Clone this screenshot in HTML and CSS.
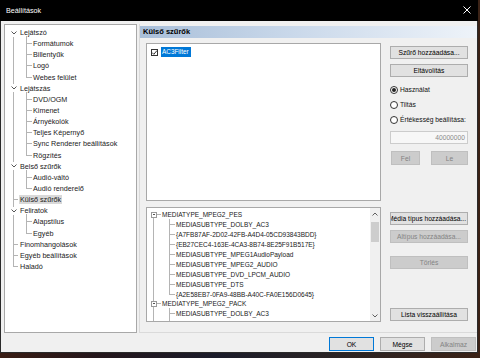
FILE: index.html
```html
<!DOCTYPE html>
<html lang="hu">
<head>
<meta charset="utf-8">
<title>Beállítások</title>
<link rel="stylesheet" href="styles.css">
</head>
<body>
<div class="window">
  <div class="titlebar">
    <span class="title">Beállítások</span>
    <svg class="close" width="8" height="8" viewBox="0 0 8 8"><path d="M0.5 0.5L7.5 7.5M7.5 0.5L0.5 7.5" stroke="#fff" stroke-width="1" fill="none"/></svg>
  </div>
  <div class="client">
    <div class="main">
      <div class="nav">
        <ul class="tree">
          <li>
            <div class="trow"><span class="tog"><svg width="6" height="4" viewBox="0 0 6 4"><path d="M0.5 0.5L3 3L5.5 0.5" stroke="#555" fill="none"/></svg></span><span>Lejátszó</span></div>
            <ul class="tsub">
              <li><div class="trow child"><span class="cstub"></span><span>Formátumok</span></div></li>
              <li><div class="trow child"><span class="cstub"></span><span>Billentyűk</span></div></li>
              <li><div class="trow child"><span class="cstub"></span><span>Logó</span></div></li>
              <li><div class="trow child"><span class="cstub"></span><span>Webes felület</span></div></li>
            </ul>
          </li>
          <li>
            <div class="trow"><span class="tog"><svg width="6" height="4" viewBox="0 0 6 4"><path d="M0.5 0.5L3 3L5.5 0.5" stroke="#555" fill="none"/></svg></span><span>Lejátszás</span></div>
            <ul class="tsub">
              <li><div class="trow child"><span class="cstub"></span><span>DVD/OGM</span></div></li>
              <li><div class="trow child"><span class="cstub"></span><span>Kimenet</span></div></li>
              <li><div class="trow child"><span class="cstub"></span><span>Árnyékolók</span></div></li>
              <li><div class="trow child"><span class="cstub"></span><span>Teljes Képernyő</span></div></li>
              <li><div class="trow child"><span class="cstub"></span><span>Sync Renderer beállítások</span></div></li>
              <li><div class="trow child"><span class="cstub"></span><span>Rögzítés</span></div></li>
            </ul>
          </li>
          <li>
            <div class="trow"><span class="tog"><svg width="6" height="4" viewBox="0 0 6 4"><path d="M0.5 0.5L3 3L5.5 0.5" stroke="#555" fill="none"/></svg></span><span>Belső szűrők</span></div>
            <ul class="tsub">
              <li><div class="trow child"><span class="cstub"></span><span>Audió-váltó</span></div></li>
              <li><div class="trow child"><span class="cstub"></span><span>Audió renderelő</span></div></li>
            </ul>
          </li>
          <li><div class="trow"><span class="stub"></span><span class="sel">Külső szűrők</span></div></li>
          <li>
            <div class="trow"><span class="tog"><svg width="6" height="4" viewBox="0 0 6 4"><path d="M0.5 0.5L3 3L5.5 0.5" stroke="#555" fill="none"/></svg></span><span>Feliratok</span></div>
            <ul class="tsub">
              <li><div class="trow child"><span class="cstub"></span><span>Alapstílus</span></div></li>
              <li><div class="trow child"><span class="cstub"></span><span>Egyéb</span></div></li>
            </ul>
          </li>
          <li><div class="trow"><span class="stub"></span><span>Finomhangolások</span></div></li>
          <li><div class="trow"><span class="stub"></span><span>Egyéb beállítások</span></div></li>
          <li><div class="trow"><span class="stub"></span><span>Haladó</span></div></li>
        </ul>
      </div>

      <div class="page">
        <div class="page-header">Külső szűrők</div>
        <div class="page-body">
          <div class="section upper">
            <div class="listbox">
              <div class="litem">
                <span class="check"><svg width="7" height="7" viewBox="0 0 7 7"><path d="M1 3.5L2.8 5.3L6 1.5" stroke="#333" fill="none"/></svg></span>
                <span class="lsel">AC3Filter</span>
              </div>
            </div>
            <div class="side">
              <button class="btn b-add">Szűrő hozzáadása...</button>
              <button class="btn b-remove">Eltávolítás</button>
              <div class="radios">
                <label class="radio"><span class="rdot on"></span>Használat</label>
                <label class="radio"><span class="rdot"></span>Tiltás</label>
                <label class="radio"><span class="rdot"></span>Értékesség beállítása:</label>
              </div>
              <div class="numbox">40000000</div>
              <div class="updown">
                <button class="btn dis b-up">Fel</button>
                <button class="btn dis b-down">Le</button>
              </div>
            </div>
          </div>
          <div class="section lower">
            <div class="typebox">
              <div class="tlist">
                <ul class="mtree">
                  <li>
                    <div class="mrow"><span class="mbox"></span><span class="mstub"></span><span>MEDIATYPE_MPEG2_PES</span></div>
                    <ul class="msub">
                      <li><div class="mrow mchild"><span class="mcstub"></span><span>MEDIASUBTYPE_DOLBY_AC3</span></div></li>
                      <li><div class="mrow mchild"><span class="mcstub"></span><span>{A7FB87AF-2D02-42FB-A4D4-05CD93843BDD}</span></div></li>
                      <li><div class="mrow mchild"><span class="mcstub"></span><span>{EB27CEC4-163E-4CA3-8B74-8E25F91B517E}</span></div></li>
                      <li><div class="mrow mchild"><span class="mcstub"></span><span>MEDIASUBTYPE_MPEG1AudioPayload</span></div></li>
                      <li><div class="mrow mchild"><span class="mcstub"></span><span>MEDIASUBTYPE_MPEG2_AUDIO</span></div></li>
                      <li><div class="mrow mchild"><span class="mcstub"></span><span>MEDIASUBTYPE_DVD_LPCM_AUDIO</span></div></li>
                      <li><div class="mrow mchild"><span class="mcstub"></span><span>MEDIASUBTYPE_DTS</span></div></li>
                      <li><div class="mrow mchild"><span class="mcstub"></span><span>{A2E58EB7-0FA9-48BB-A40C-FA0E156D0645}</span></div></li>
                    </ul>
                  </li>
                  <li>
                    <div class="mrow"><span class="mbox"></span><span class="mstub"></span><span>MEDIATYPE_MPEG2_PACK</span></div>
                    <ul class="msub more">
                      <li><div class="mrow mchild"><span class="mcstub"></span><span>MEDIASUBTYPE_DOLBY_AC3</span></div></li>
                    </ul>
                  </li>
                </ul>
              </div>
              <div class="vscroll">
                <svg class="sarrow" width="6" height="4" viewBox="0 0 6 4"><path d="M0.5 3.5L3 1L5.5 3.5" stroke="#606060" fill="none"/></svg>
                <div class="thumb"></div>
                <svg class="sarrow down" width="6" height="4" viewBox="0 0 6 4"><path d="M0.5 0.5L3 3L5.5 0.5" stroke="#606060" fill="none"/></svg>
              </div>
            </div>
            <div class="side side-lower">
              <button class="btn b-media"><span class="clip">Média típus hozzáadása...</span></button>
              <button class="btn dis b-sub">Altípus hozzáadása...</button>
              <button class="btn dis b-del">Törlés</button>
              <button class="btn b-reset">Lista visszaállítása</button>
            </div>
          </div>
        </div>
      </div>
    </div>
    <div class="footer">
      <button class="btn fbtn default">OK</button>
      <button class="btn fbtn">Mégse</button>
      <button class="btn fbtn dis">Alkalmaz</button>
    </div>
  </div>
</div>
</body>
</html>
```

FILE: styles.css
```css
html, body {
  margin: 0;
  padding: 0;
}
body {
  width: 480px;
  height: 358px;
  overflow: hidden;
  background: linear-gradient(to right, #3a1d14 0%, #24161b 20%, #1b1c2a 45%, #2b2424 70%, #3b2216 100%);
  font-family: "Liberation Sans", Arial, sans-serif;
  color: #000;
}
ul { list-style: none; margin: 0; padding: 0; }

.window {
  width: 478px;
  height: 353px;
  box-sizing: border-box;
  border: 1px solid #2a2a2a;
  border-top: none;
  background: #f0f0f0;
  display: flex;
  flex-direction: column;
}
.titlebar {
  height: 21px;
  flex: none;
  background: #000;
  margin: 0 -1px;
  display: flex;
  align-items: center;
  justify-content: space-between;
  padding: 0 6px 1px 6px;
  box-sizing: border-box;
}
.title {
  color: #fff;
  font-size: 7.2px;
}
.close { display: block; margin-right: 1px; }

.client {
  flex: 1;
  display: flex;
  flex-direction: column;
  padding: 3px 0 0 3px;
}
.main {
  display: flex;
  gap: 2px;
  height: 309px;
}

/* navigation tree */
.nav {
  width: 133px;
  flex: none;
  box-sizing: border-box;
  border: 1px solid #a8a8a8;
  background: #fff;
  padding-top: 2px;
  font-size: 7.2px;
  overflow: hidden;
}
.tree { position: relative; }
.tree::before {
  content: "";
  position: absolute;
  left: 8px;
  top: 5px;
  bottom: 6px;
  border-left: 1px solid #b4b4b4;
}
.tsub { position: relative; }
.tsub::before {
  content: "";
  position: absolute;
  left: 21px;
  top: -2px;
  bottom: 6px;
  border-left: 1px solid #b4b4b4;
}
.trow {
  height: 11.15px;
  display: flex;
  align-items: center;
  padding-left: 4px;
  white-space: nowrap;
  color: #1a1a1a;
}
.tog {
  width: 9px;
  height: 8px;
  flex: none;
  margin-right: 2px;
  display: flex;
  align-items: center;
  justify-content: center;
  background: #fff;
  position: relative;
  z-index: 1;
}
.tog svg { display: block; }
.stub {
  width: 9px;
  align-self: stretch;
  flex: none;
  margin-right: 2px;
  background: linear-gradient(#b4b4b4, #b4b4b4) no-repeat 4px 50% / 6px 1px;
}
.trow.child { padding-left: 21px; }
.cstub {
  width: 6px;
  align-self: stretch;
  flex: none;
  margin-right: 1px;
  background: linear-gradient(#b4b4b4, #b4b4b4) no-repeat 0 50% / 6px 1px;
}
.sel {
  background: #d9d9d9;
  padding: 0 1px;
  margin-left: -1px;
}

/* page */
.page {
  width: 338px;
  flex: none;
  box-sizing: border-box;
  border-left: 1px solid #dadada;
  border-bottom: 1px solid #dadada;
  display: flex;
  flex-direction: column;
}
.page-header {
  margin-top: 2px;
  height: 12px;
  line-height: 12px;
  padding-left: 3px;
  font-weight: bold;
  font-size: 7.5px;
  background: linear-gradient(to right, #a9bfd9 0%, #c9d8ea 45%, #eef3f9 100%);
}
.page-body {
  padding-left: 6px;
  padding-top: 5px;
}
.section { display: flex; gap: 9px; }
.listbox {
  width: 235px;
  height: 158px;
  box-sizing: border-box;
  border: 1px solid #a8a8a8;
  background: #fff;
  padding: 3px 0 0 4px;
}
.litem {
  display: flex;
  align-items: center;
  height: 10px;
}
.check {
  width: 7px;
  height: 7px;
  box-sizing: border-box;
  border: 1px solid #333;
  display: flex;
  align-items: center;
  justify-content: center;
  margin-right: 3px;
}
.check svg { display: block; flex: none; }
.lsel {
  background: #0078d7;
  color: #fff;
  font-size: 6.4px;
  line-height: 10px;
  padding: 0 2px 0 1px;
}

.side {
  width: 78px;
  display: flex;
  flex-direction: column;
  font-size: 6.7px;
}
.btn {
  display: block;
  box-sizing: border-box;
  width: 78px;
  height: 13px;
  padding: 0;
  margin: 0;
  border: 1px solid #adadad;
  background: #e1e1e1;
  font-family: "Liberation Sans", Arial, sans-serif;
  font-size: 6.7px;
  color: #000;
  text-align: center;
  white-space: nowrap;
  overflow: hidden;
}
.btn.dis {
  background: #cccccc;
  border-color: #bfbfbf;
  color: #838383;
}
.b-add { margin-top: 3px; }
.b-remove { margin-top: 5px; }
.radios {
  margin-top: 5px;
  display: flex;
  flex-direction: column;
}
.radio {
  height: 15px;
  display: flex;
  align-items: center;
  white-space: nowrap;
  color: #111;
}
.rdot {
  width: 8px;
  height: 8px;
  box-sizing: border-box;
  border: 1px solid #333;
  border-radius: 50%;
  background: #fff;
  margin-right: 2px;
  display: flex;
  align-items: center;
  justify-content: center;
}
.rdot.on::after {
  content: "";
  width: 4px;
  height: 4px;
  border-radius: 50%;
  background: #222;
}
.numbox {
  margin-top: 4px;
  height: 13px;
  box-sizing: border-box;
  border: 1px solid #cccccc;
  background: #f7f7f7;
  color: #8a8a8a;
  text-align: right;
  line-height: 11px;
  padding-right: 2px;
}
.updown {
  margin-top: 7px;
  display: flex;
  justify-content: space-between;
}
.b-up { width: 29px; height: 14px; margin-left: 1px; }
.b-down { width: 37px; height: 14px; }

/* lower section */
.lower { margin-top: 6px; }
.typebox {
  width: 235px;
  height: 115px;
  box-sizing: border-box;
  border: 1px solid #a8a8a8;
  background: #fff;
  display: flex;
}
.tlist {
  flex: 1;
  overflow: hidden;
  padding-top: 2px;
  font-size: 6.5px;
  color: #1a1a1a;
}
.mtree { position: relative; }
.mtree::before {
  content: "";
  position: absolute;
  left: 6px;
  top: 5px;
  bottom: -20px;
  border-left: 1px solid #b4b4b4;
}
.msub { position: relative; }
.msub::before {
  content: "";
  position: absolute;
  left: 22px;
  top: -1px;
  bottom: 5px;
  border-left: 1px solid #b4b4b4;
}
.msub.more::before { bottom: -20px; }
.mrow {
  height: 9.9px;
  display: flex;
  align-items: center;
  padding-left: 4px;
  white-space: nowrap;
}
.mbox {
  width: 6px;
  height: 6px;
  box-sizing: border-box;
  border: 1px solid #9a9a9a;
  background: linear-gradient(#555, #555) no-repeat 50% 50% / 2px 1px, #fff;
  position: relative;
  z-index: 1;
  flex: none;
}
.mstub {
  width: 4px;
  align-self: stretch;
  flex: none;
  margin-right: 1px;
  background: linear-gradient(#b4b4b4, #b4b4b4) no-repeat 0 50% / 4px 1px;
}
.mrow.mchild { padding-left: 22px; }
.mcstub {
  width: 6px;
  align-self: stretch;
  flex: none;
  margin-right: 1px;
  background: linear-gradient(#b4b4b4, #b4b4b4) no-repeat 0 50% / 6px 1px;
}
.vscroll {
  width: 10px;
  flex: none;
  background: #f0f0f0;
  display: flex;
  flex-direction: column;
  align-items: center;
}
.sarrow { display: block; margin-top: 4px; }
.sarrow.down { margin-top: auto; margin-bottom: 3px; }
.thumb {
  width: 8px;
  height: 20px;
  margin-top: 6px;
  background: #cdcdcd;
}

.side-lower { height: 115px; }
.b-media { margin-top: 5px; text-align: left; }
.b-media .clip { display: block; margin-left: -3px; }
.b-sub { margin-top: 5px; }
.b-del { margin-top: 13px; }
.b-reset { margin-top: auto; margin-bottom: 1px; }

/* footer */
.footer {
  display: flex;
  justify-content: flex-end;
  gap: 6px;
  padding: 4px 1px 0 0;
}
.fbtn {
  width: 45px;
  height: 14px;
}
.fbtn.default {
  border-color: #0078d7;
}
```
